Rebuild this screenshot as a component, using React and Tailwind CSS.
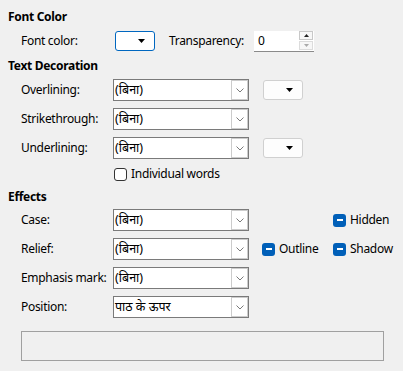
import React from 'react'

const FONT = "font-['Noto_Sans','Noto_Sans_Devanagari','Nirmala_UI',sans-serif]"

function Header({ children, className = '' }) {
  return <div className={`h-4 leading-4 font-bold ${className}`}>{children}</div>
}

function Combo({ value }) {
  return (
    <div className="flex h-[22px] w-[136px] border border-[#7a7a7a] bg-white">
      <div className="flex-1 pl-[1px] leading-[20px] text-[12.5px] tracking-normal truncate">{value}</div>
      <div className="flex w-[17px] items-center justify-center border border-[#cccccc] bg-white">
        <svg width="8" height="5" viewBox="0 0 8 5">
          <path d="M0.5 0.5 L4 4 L7.5 0.5" fill="none" stroke="#7a7a7a" strokeWidth="1" />
        </svg>
      </div>
    </div>
  )
}

function ColorButton({ focused }) {
  return (
    <div
      className={`flex h-[20px] w-[40px] items-center justify-end pr-[9px] rounded-[3px] border ${
        focused ? 'border-[#0067c0] bg-white' : 'border-[#d0d0d0] bg-[#fdfdfd]'
      }`}
    >
      <svg width="7" height="4" viewBox="0 0 7 4">
        <path d="M0 0 L7 0 L3.5 4 Z" fill="#000" />
      </svg>
    </div>
  )
}

function Checked({ label }) {
  return (
    <div className="flex items-center">
      <div className="flex h-[13px] w-[13px] items-center justify-center rounded-[3px] bg-[#005fb8]">
        <div className="h-[1.5px] w-[6px] bg-white" />
      </div>
      <span className="ml-[4px]">{label}</span>
    </div>
  )
}

function Row({ label, value, children }) {
  return (
    <div className="flex h-[22px] items-center pl-[13px]">
      <span className="w-[92px] shrink-0">{label}</span>
      <Combo value={value} />
      {children}
    </div>
  )
}

export default function App() {
  return (
    <div className={`h-[371px] w-[403px] bg-[#f0f0f0] pl-2 pt-[9px] text-[12px] tracking-[-0.3px] text-black ${FONT}`}>
      <Header>Font Color</Header>
      <div className="mt-[6px] flex h-[20px] items-center pl-[13px]">
        <span className="w-[94px] shrink-0">Font color:</span>
        <ColorButton focused />
        <span className="ml-[14px] w-[85px] shrink-0">Transparency:</span>
        <div className="flex h-[21px] w-[60px] items-center border-b border-[#8a8a8a] bg-white">
          <span className="flex-1 pl-[4px]">0</span>
          <div className="flex w-[15px] flex-col gap-[1px] pr-[1px]">
            <div className="flex h-[9px] items-center justify-center border border-[#c8c8c8] bg-[#f7f7f7]">
              <svg width="5" height="3" viewBox="0 0 5 3"><path d="M0 3 L5 3 L2.5 0 Z" fill="#222" /></svg>
            </div>
            <div className="flex h-[9px] items-center justify-center border border-[#dcdcdc] bg-[#f7f7f7]">
              <svg width="5" height="3" viewBox="0 0 5 3"><path d="M0 0 L5 0 L2.5 3 Z" fill="#aaa" /></svg>
            </div>
          </div>
        </div>
      </div>

      <Header className="mt-[7px]">Text Decoration</Header>
      <div className="mt-[5px] flex flex-col gap-[7px]">
        <Row label="Overlining:" value="(बिना)">
          <div className="ml-[14px]"><ColorButton /></div>
        </Row>
        <Row label="Strikethrough:" value="(बिना)" />
        <Row label="Underlining:" value="(बिना)">
          <div className="ml-[14px]"><ColorButton /></div>
        </Row>
      </div>
      <div className="mt-[8px] flex h-[14px] items-center pl-[106px]">
        <div className="h-[13px] w-[13px] rounded-[3px] border border-[#333] bg-white" />
        <span className="ml-[4px]">Individual words</span>
      </div>

      <Header className="mt-[8px]">Effects</Header>
      <div className="mt-[4px] flex flex-col gap-[7px]">
        <Row label="Case:" value="(बिना)">
          <div className="ml-[84px]"><Checked label="Hidden" /></div>
        </Row>
        <Row label="Relief:" value="(बिना)">
          <div className="ml-[13px] w-[71px]"><Checked label="Outline" /></div>
          <Checked label="Shadow" />
        </Row>
        <Row label="Emphasis mark:" value="(बिना)" />
        <Row label="Position:" value="पाठ के ऊपर" />
      </div>

      <div className="ml-[13px] mt-[13px] h-[30px] w-[363px] border border-[#a0a0a0] bg-[#f0f0f0]" />
    </div>
  )
}
